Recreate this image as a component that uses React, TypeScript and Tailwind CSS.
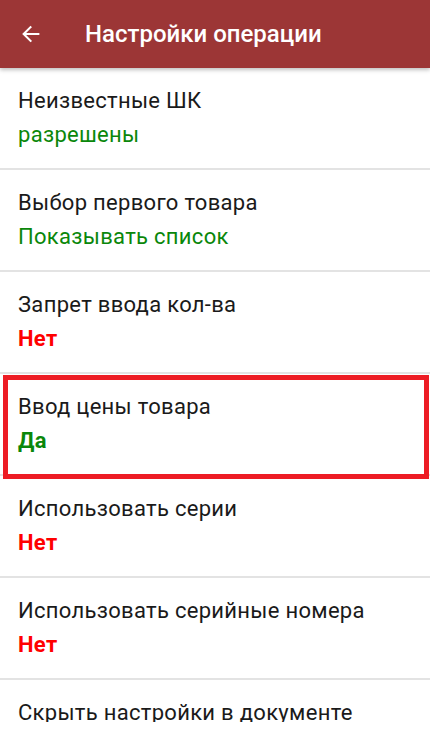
import React from "react";

type Setting = {
  title: string;
  value?: string;
  tone?: "green" | "red";
  bold?: boolean;
  highlighted?: boolean;
};

const settings: Setting[] = [
  { title: "Неизвестные ШК", value: "разрешены", tone: "green" },
  { title: "Выбор первого товара", value: "Показывать список", tone: "green" },
  { title: "Запрет ввода кол-ва", value: "Нет", tone: "red", bold: true },
  { title: "Ввод цены товара", value: "Да", tone: "green", bold: true, highlighted: true },
  { title: "Использовать серии", value: "Нет", tone: "red", bold: true },
  { title: "Использовать серийные номера", value: "Нет", tone: "red", bold: true },
  // last row is cut by the screen edge in the screenshot
  { title: "Скрыть настройки в документе" },
];

const BackArrow = () => (
  <svg width="22" height="22" viewBox="0 0 24 24" fill="none">
    <path
      d="M20 12H4.5M11.5 4.5L4 12l7.5 7.5"
      stroke="white"
      strokeWidth="2.3"
      strokeLinecap="square"
    />
  </svg>
);

const SettingRow = ({ item }: { item: Setting }) => (
  <div className="relative shrink-0">
    <div
      className={`h-[100px] px-[18px] flex flex-col gap-[10px] ${
        item.value ? "justify-center" : "pt-[21px]"
      }`}
    >
      <div className="text-[22px] leading-[24px] tracking-[0.3px] text-[#1a1a1a] whitespace-nowrap">
        {item.title}
      </div>
      {item.value && (
        <div
          className={`text-[22px] leading-[24px] tracking-[0.3px] ${
            item.tone === "green" ? "text-[#0a870a]" : "text-[#ff0000]"
          } ${item.bold ? "font-bold" : ""}`}
        >
          {item.value}
        </div>
      )}
    </div>
    <div className="h-[2px] bg-[#e3e3e3]" />
    {/* highlight frame */}
    {item.highlighted && (
      <div className="absolute left-[3px] right-[1px] top-[1px] bottom-[-3px] border-[5px] border-[#ed1c24]" />
    )}
  </div>
);

export default function App() {
  return (
    <div
      className="w-[430px] h-[740px] overflow-hidden bg-white"
      style={{ fontFamily: "Roboto, 'Noto Sans', sans-serif" }}
    >
      {/* Toolbar */}
      <div className="relative z-10 h-[68px] bg-[#9c3636] flex items-center pl-[20px] shadow-[0_2px_4px_rgba(0,0,0,0.25)]">
        <BackArrow />
        <span className="ml-[43px] text-[24px] font-medium text-white">
          Настройки операции
        </span>
      </div>

      {/* Settings list */}
      <div className="h-[654px] overflow-hidden flex flex-col">
        {settings.map((s) => (
          <SettingRow key={s.title} item={s} />
        ))}
      </div>
    </div>
  );
}
